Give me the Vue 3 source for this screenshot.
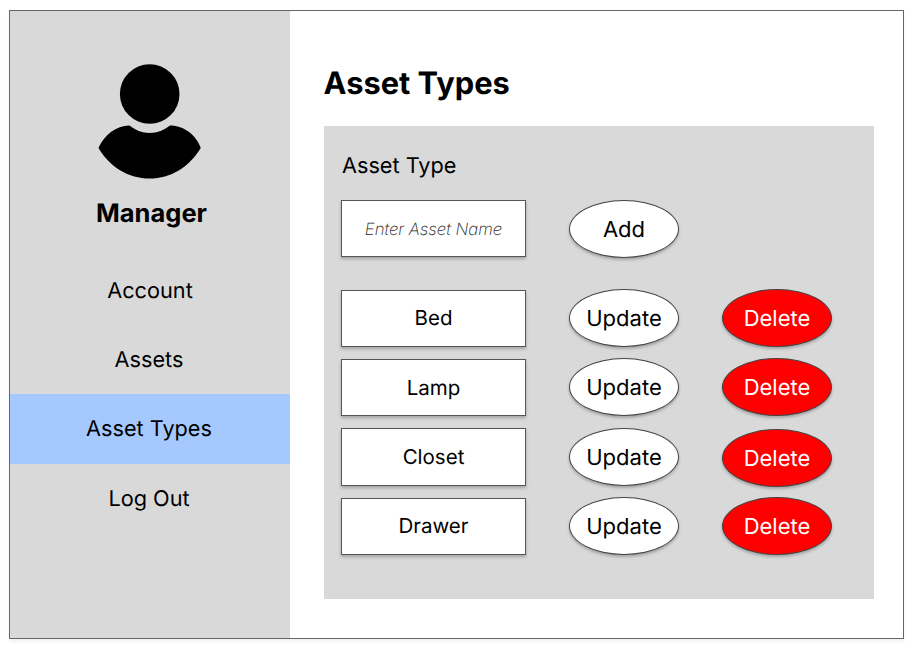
<script setup>
const links = [
  { label: 'Account', active: false },
  { label: 'Assets', active: false },
  { label: 'Asset Types', active: true },
  { label: 'Log Out', active: false },
]
const types = ['Bed', 'Lamp', 'Closet', 'Drawer']
</script>

<template>
  <div class="page">
    <div class="frame">
      <aside class="sidebar">
        <svg class="avatar" viewBox="0 0 104 116" width="104" height="116" aria-hidden="true">
          <circle cx="51.7" cy="30" r="29.8" />
          <path d="M31.5 61.5C37 66 44 69 51.7 69S66.500 66 72 61.500C86 61.500 98 71 102.500 83.200Q102.700 84 102.300 84.800C91 103 73 114.600 51.700 114.600S12 103 0.900 84.800Q0.500 84 0.800 83.200C6.500 71 18 61.500 31.500 61.500Z" />
        </svg>
        <h2 class="role">Manager</h2>
        <nav class="nav">
          <a v-for="link in links" :key="link.label" class="link" :class="{ active: link.active }">{{ link.label }}</a>
        </nav>
      </aside>
      <main class="main">
        <h1 class="title">Asset Types</h1>
        <section class="panel">
          <label class="label" for="asset-name">Asset Type</label>
          <div class="row form">
            <input id="asset-name" class="box" type="text" placeholder="Enter Asset Name" />
            <button class="pill">Add</button>
          </div>
          <div class="list">
            <div v-for="t in types" :key="t" class="row">
              <div class="box">{{ t }}</div>
              <button class="pill">Update</button>
              <button class="pill danger">Delete</button>
            </div>
          </div>
        </section>
      </main>
    </div>
  </div>
</template>

<style>
body {
  background: #fff;
}
</style>

<style scoped>
* {
  box-sizing: border-box;
}
.page {
  height: 648px;
  padding: 10px 10px 9px 9px;
  font-family: Inter, sans-serif;
  font-size: 21.7px;
  color: #000;
  text-rendering: geometricPrecision;
}
.frame {
  display: flex;
  height: 629px;
  border: 1px solid #666;
  background: #fff;
  box-shadow: 0 3px 3px rgba(0, 0, 0, 0.05);
}
.sidebar {
  display: flex;
  flex-direction: column;
  align-items: center;
  width: 280px;
  padding-top: 53px;
  background: #d9d9d9;
}
.avatar {
  display: block;
}
.role {
  margin: 18px 0 0 3px;
  font-size: 25.5px;
  line-height: 32px;
  font-weight: 700;
}
.nav {
  align-self: stretch;
  margin-top: 26px;
}
.link {
  display: flex;
  align-items: center;
  justify-content: center;
  height: 69.2px;
  padding-right: 2px;
}
.link:first-child {
  padding-right: 0;
}
.link:last-child {
  padding-top: 1px;
}
.link.active {
  background: #a5c8ff;
}
.main {
  padding: 53px 0 0 34px;
}
.title {
  margin: 0 0 0 -0.5px;
  font-size: 30.8px;
  line-height: 40px;
  font-weight: 700;
}
.panel {
  width: 549.5px;
  height: 473px;
  margin-top: 22px;
  padding: 26px 17px 0;
  background: #d9d9d9;
}
.label {
  display: block;
  height: 28px;
  line-height: 28px;
  padding-left: 1px;
}
.row {
  display: grid;
  grid-template-columns: 185px 110px 110px;
  column-gap: 43px;
  height: 58px;
}
.form {
  margin-top: 20px;
}
.list {
  display: grid;
  row-gap: 11.4px;
  margin-top: 31.6px;
}
.box {
  display: flex;
  align-items: center;
  justify-content: center;
  width: 185px;
  height: 57.4px;
  padding: 0 0 1px;
  border: 1px solid #555;
  border-radius: 0;
  background: #fff;
  box-shadow: 0 2px 3px rgba(0, 0, 0, 0.25);
  font-family: inherit;
  font-size: 20.5px;
  text-rendering: inherit;
  text-align: center;
}
input.box {
  padding: 0 0 3px;
}
.box::placeholder {
  color: #222;
  font-size: 16.8px;
  font-style: italic;
  font-weight: 200;
  opacity: 1;
}
.pill {
  height: 58px;
  margin-top: -0.5px;
  padding: 2px 0 0;
  border: 1px solid #444;
  border-radius: 50%;
  background: #fff;
  box-shadow: 0 2px 3px rgba(0, 0, 0, 0.25);
  color: #000;
  font: inherit;
  font-size: 22px;
  text-rendering: inherit;
}
.danger {
  background: #f00;
  color: #fff;
}
.row:nth-child(3) .danger {
  margin-top: 0.5px;
}
</style>
